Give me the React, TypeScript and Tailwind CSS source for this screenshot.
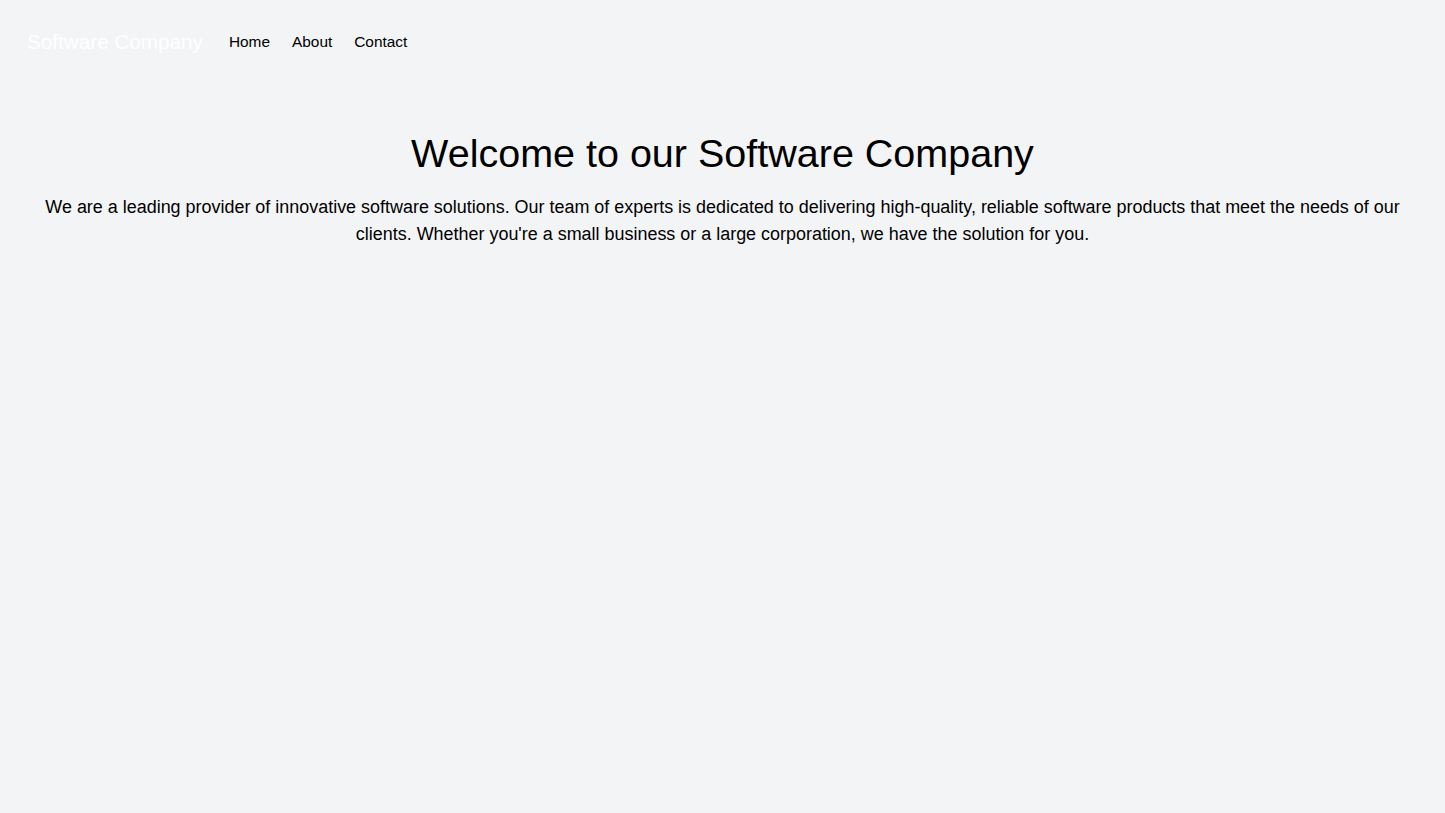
export default function App() {
  return (
    <div className="min-h-screen bg-gray-100 text-black font-['Liberation_Sans',Arial,sans-serif]">
      <nav className="flex items-center px-[27px] py-7">
        <span className="mr-[26px] text-[20.7px] leading-7 text-white">Software Company</span>
        <div className="flex items-center gap-[22px] text-[15.4px]">
          <a href="#">Home</a>
          <a href="#">About</a>
          <a href="#">Contact</a>
        </div>
      </nav>
      <main className="px-10 pt-[49px] text-center">
        <h1 className="mb-[21px] text-[39.5px] leading-10">Welcome to our Software Company</h1>
        <p className="text-[17.95px] leading-[27px]">
          We are a leading provider of innovative software solutions. Our team of experts is dedicated to delivering high-quality, reliable software products that meet the needs of our clients. Whether you're a small business or a large corporation, we have the solution for you.
        </p>
      </main>
    </div>
  );
}
